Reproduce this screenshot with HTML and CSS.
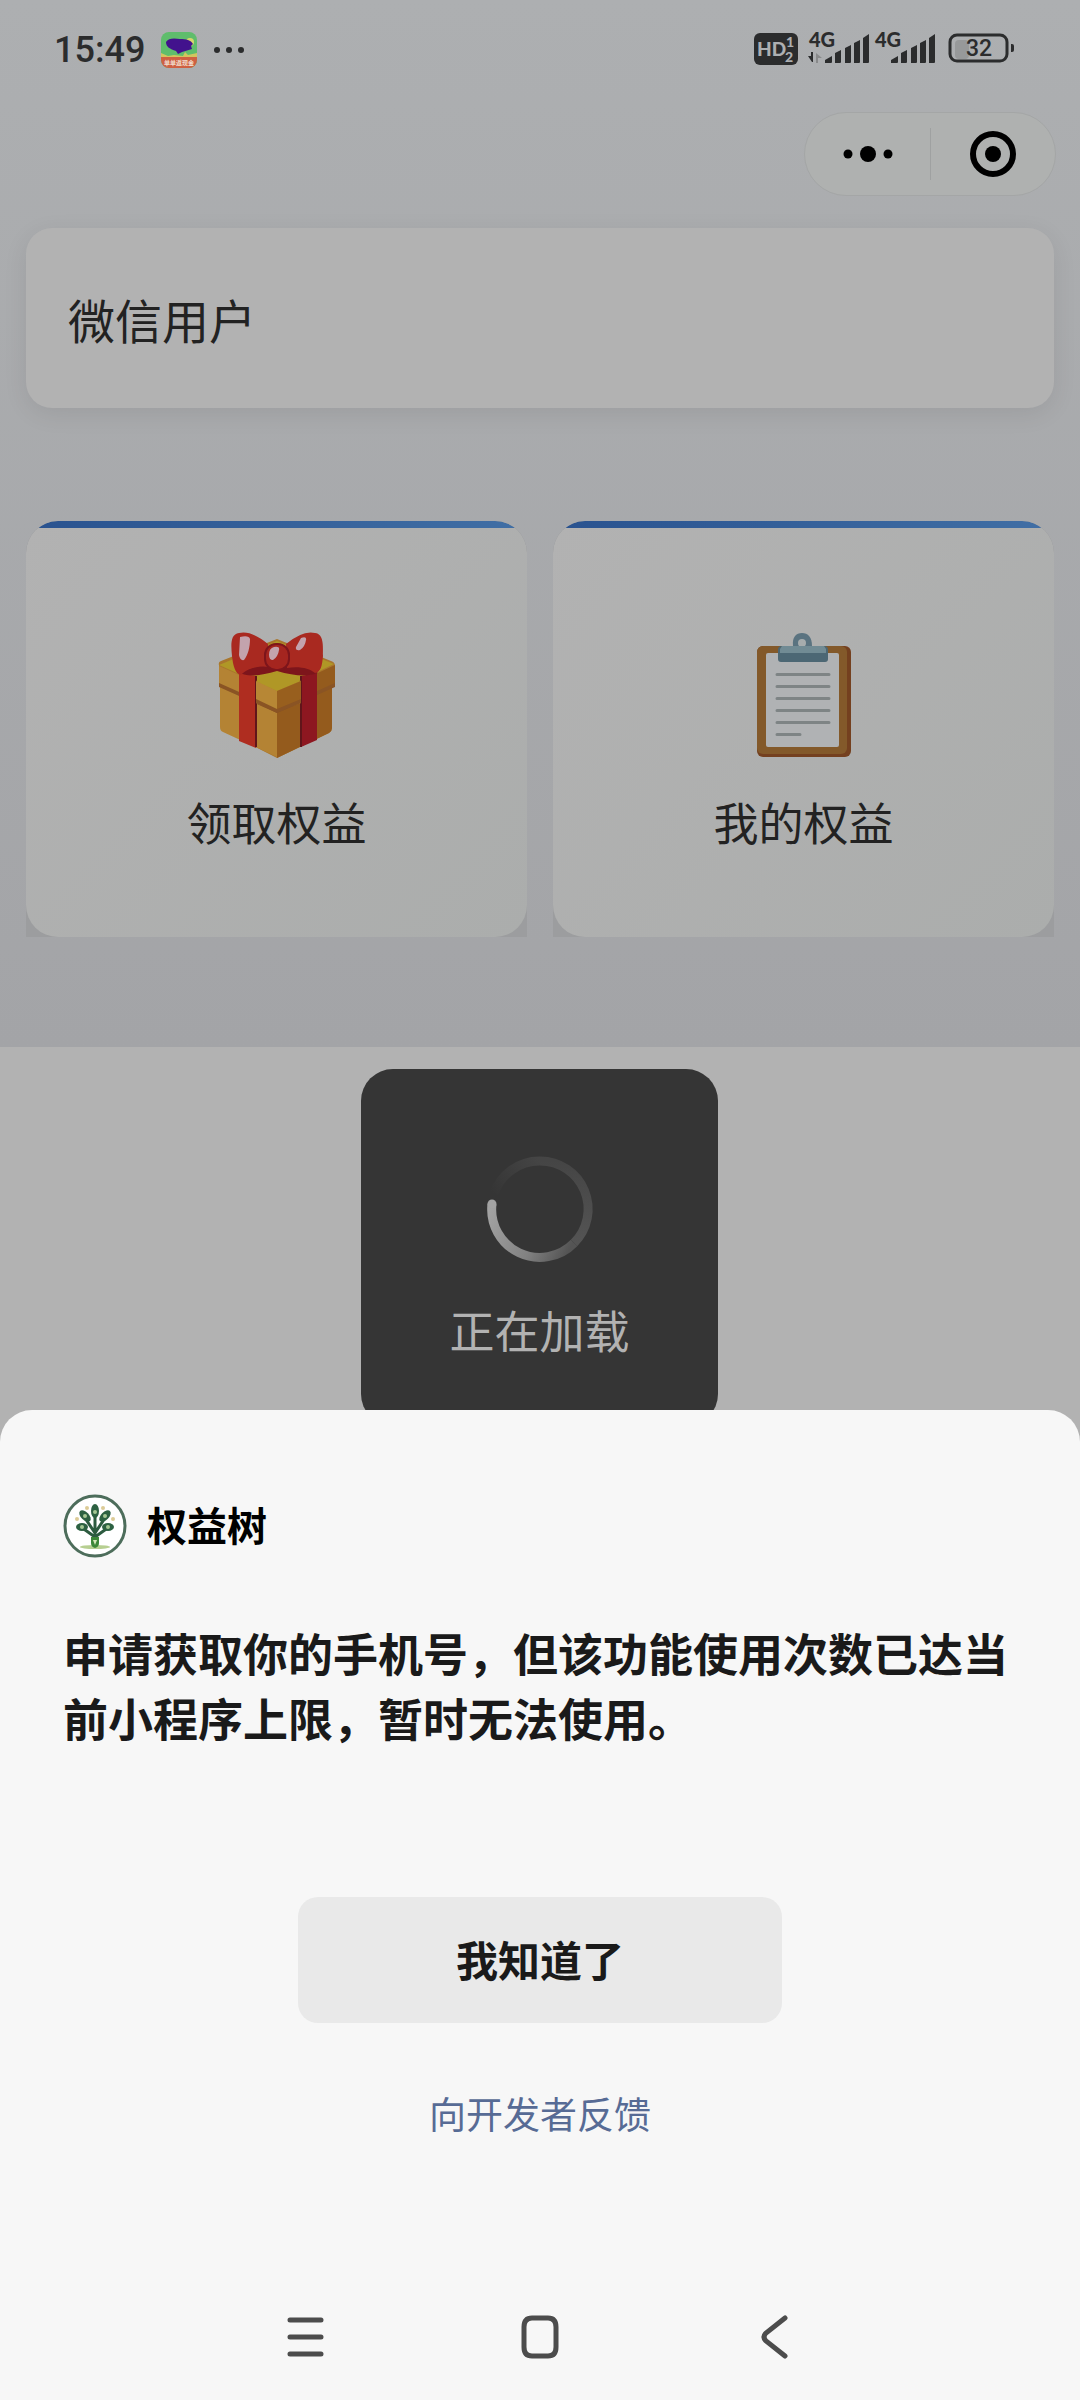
FILE: index.html
```html
<!DOCTYPE html>
<html lang="zh-CN">
<head>
<meta charset="utf-8">
<meta name="viewport" content="width=device-width, initial-scale=1">
<title>权益树</title>
<link rel="stylesheet" href="styles.css">
</head>
<body>
<div class="screen">
  <main class="home">
    <header class="status">
      <time class="clock">15:49</time>
      <svg class="app-badge" viewBox="0 0 36 36" width="36" height="36" aria-hidden="true">
        <defs><clipPath id="badge"><rect width="36" height="36" rx="8"/></clipPath></defs>
        <g clip-path="url(#badge)">
          <rect width="36" height="36" fill="#5fbd6c"/>
          <circle cx="29" cy="10" r="4" fill="#d6d56d"/>
          <path d="M0 21l7 3 6-1 9 1 2-4 3 3 9-2v6H0z" fill="#d3c45f"/>
          <rect y="25" width="36" height="11" fill="#cf6042"/>
          <path d="M7 11l4 6 5 2-2-6z" fill="#e6d49c"/>
          <path d="M5 10c2-4 8-4 14-3 6 0 11 1 13 5l-2 2 1 3-10 3-4 2-2-3c-6-2-10-4-10-9z" fill="#42128d"/>
        </g>
        <text class="badge-text" x="18" y="33" text-anchor="middle">单单返现金</text>
      </svg>
      <svg width="32" height="8" viewBox="0 0 32 8" fill="#2b2c2d" aria-hidden="true"><circle cx="4" cy="4" r="3"/><circle cx="16" cy="4" r="3"/><circle cx="28" cy="4" r="3"/></svg>
      <div class="status-right">
        <svg width="262" height="48" viewBox="0 -6 262 48" fill="#2b2c2d" role="img" aria-label="HD 4G 4G 32%">
          <rect x="0" y="1" width="44" height="32" rx="6"/>
          <g class="hd" fill="#adafb1"><text x="3" y="24" font-size="19">HD</text><text x="32" y="15" font-size="14">1</text><text x="31" y="30" font-size="14">2</text></g>
          <g id="net"><text class="net" x="55" y="15">4G</text><path d="M71 31v-3l7-4v6q0 1-1 1zM81 31V21l6-3v12q0 1-1 1zM91 31V16l6-3v17q0 1-1 1zM100 31V11l6-3v22q0 1-1 1zM109 31V6l6-4v28q0 1-1 1z"/></g>
          <use href="#net" x="66"/>
          <path d="M54 24h3v-4h2v10h-1z"/><path d="M62 21l6 5h-4v5h-2z" fill="#88898a"/>
          <rect x="201" y="8" width="14" height="19" rx="4" fill="#97999a"/>
          <rect x="196" y="3" width="57" height="26" rx="7" fill="none" stroke="#2b2c2d" stroke-width="3"/>
          <path d="M257 12h1q2 0 2 2v4q0 2-2 2h-1z"/>
          <text class="battery" x="225" y="24" text-anchor="middle">32</text>
        </svg>
      </div>
    </header>
    <div class="capsule-row">
      <div class="capsule">
        <button class="capsule-button" type="button" aria-label="更多"><svg width="52" height="24" viewBox="0 0 52 24"><circle cx="6" cy="12" r="4.500"/><circle cx="26" cy="12" r="8"/><circle cx="46" cy="12" r="4.500"/></svg></button>
        <button class="capsule-button" type="button" aria-label="关闭"><svg width="48" height="48" viewBox="0 0 48 48"><circle cx="24" cy="24" r="20" fill="none" stroke="#000" stroke-width="6"/><circle cx="24" cy="24" r="8"/></svg></button>
      </div>
    </div>
    <section class="user-card">微信用户</section>
    <nav class="features">
      <a class="feature" href="#claim"><span class="feature-face">
        <svg width="120" height="128" viewBox="0 0 120 128" aria-hidden="true">
          <path d="M2 34q-1-3 2-4l56-22 54 22q4 1 4 5v18l-3 2v42q0 3-3 5l-52 25-53-27q-3-1-3-4V54l-2-2z" fill="#a9762d"/>
          <path d="M2 34L60 10l57 23-57 27z" fill="#b09726"/>
          <path d="M2 35l58 26v65L6 101q-3-1-3-5V55l-1-2z" fill="#b48334"/>
          <path d="M60 61l58-27v19l-3 3v41q0 3-3 5l-52 25z" fill="#945b1d"/>
          <path d="M2 52l58 26 58-26v4L60 82 2 56z" fill="#8a5424"/>
          <path d="M22 42l17 3v72l-17-7z" fill="#af2d20"/>
          <path d="M84 45l16-3v67l-16 7z" fill="#8d1720"/>
          <path d="M39 45v71M84 45v71" stroke="#60151a" stroke-width="2"/>
          <path d="M39 50l21-9 24 9-24 10z" fill="#b09726"/>
          <path d="M39 50l21 10 24-10v22L60 80 39 72z" fill="#b78735"/>
          <path d="M60 60l24-10v19L60 79z" fill="#985f1e"/>
          <path d="M39 68l21 10 24-10v4L60 82 39 72z" fill="#8a5424"/>
          <path d="M23 42c12-11 64-11 78 0-10 4-24 3-41-2-17 5-30 6-37 2z" fill="#7d151b"/>
          <path d="M51 13q-17-14-29-11c-9 1-8 13-7 23 1 9 3 18 9 19 5-6 17-10 28-8z" fill="#a92920"/>
          <path d="M69 13q17-14 29-11c9 1 8 13 8 23-1 10-2 16-8 17-6-5-16-7-28-5z" fill="#a92920"/>
          <rect x="48" y="13" width="24" height="26" rx="11" fill="#a5251f" stroke="#7d151b" stroke-width="2"/>
          <path d="M23 6q9-2 10 2c0 8-2 16-6 21q-4 1-5-5zM84 7q6-2 5 2-1 7-6 10-5 1-4-3zM57 16q6-1 5 3-1 7-6 10-4 0-4-5 0-7 5-8z" fill="#c3a3ad"/>
        </svg>
        <span>领取权益</span></span>
      </a>
      <a class="feature" href="#mine"><span class="feature-face">
        <svg width="120" height="128" viewBox="0 0 120 128" aria-hidden="true">
          <rect x="13" y="15" width="94" height="111" rx="6" fill="#74401f"/>
          <rect x="13" y="15" width="90" height="108" rx="6" fill="#83592a"/>
          <rect x="22" y="22" width="73" height="94" rx="2" fill="#b0b2b4"/>
          <path d="M33 43.500h52M33 55.500h52M33 67.500h52M33 79.500h52M33 91.500h52M33 103.500h23" stroke="#7e8485" stroke-width="3" stroke-linecap="round"/>
          <path d="M49 15c-1-9 3-13 9-13s10 4 10 13z" fill="#5a7380"/>
          <circle cx="58" cy="12" r="4" fill="#a6acad"/>
          <path d="M38 15h42q4 0 4 4v9q0 3-3 3H37q-3 0-3-3v-9q0-4 4-4z" fill="#4c6774"/>
          <path d="M38 15h42l2 3v4H36v-4z" fill="#718b94"/>
        </svg>
        <span>我的权益</span></span>
      </a>
    </nav>
  </main>
  <div class="rest">
    <div class="toast" role="status">
      <svg width="106" height="106" viewBox="0 0 106 106" fill="none" stroke-width="9" aria-hidden="true">
        <defs>
          <linearGradient id="right" x1="0" y1="0" x2="0" y2="1"><stop stop-color="#454545"/><stop offset="1" stop-color="#545454"/></linearGradient>
          <linearGradient id="bottom" gradientUnits="userSpaceOnUse" x1="86" y1="86" x2="6" y2="47"><stop stop-color="#545454"/><stop offset=".4" stop-color="#818181"/><stop offset="1" stop-color="#a3a3a3"/></linearGradient>
          <linearGradient id="tail" gradientUnits="userSpaceOnUse" x1="8" y1="40" x2="53" y2="5"><stop stop-color="#353535"/><stop offset="1" stop-color="#454545"/></linearGradient>
        </defs>
        <path d="M7 38A48 48 0 0 1 53 5" stroke="url(#tail)"/>
        <path d="M53 5A48 48 0 0 1 87 87" stroke="url(#right)"/>
        <path d="M87 87A48 48 0 0 1 5 48" stroke="url(#bottom)"/>
        <circle cx="5" cy="48" r="4.500" fill="#a3a3a3" stroke="none"/>
      </svg>
      <span>正在加载</span>
    </div>
  </div>
  <section class="sheet" role="dialog" aria-labelledby="message">
    <header class="brand">
      <svg width="64" height="64" viewBox="0 0 64 64" aria-hidden="true">
        <circle cx="32" cy="32" r="30" fill="#fff" stroke="#4d6d5b" stroke-width="3"/>
        <ellipse cx="32" cy="53" rx="15" ry="2" fill="#b7cf91"/>
        <path d="M32 16v30M32 39L22 24M32 39l10-15M32 43L18 33M32 43l14-10" stroke="#2d5b40" stroke-width="3" fill="none"/>
        <g fill="#2d6142"><ellipse cx="32" cy="17" rx="4" ry="7"/><ellipse cx="22" cy="22" rx="4" ry="7" transform="rotate(-45 22 22)"/><ellipse cx="42" cy="22" rx="4" ry="7" transform="rotate(45 42 22)"/><ellipse cx="19" cy="33" rx="6" ry="4"/><ellipse cx="45" cy="33" rx="6" ry="4"/></g>
        <g fill="#a5c794"><circle cx="32" cy="18" r="2"/><circle cx="22" cy="22" r="2"/><circle cx="42" cy="22" r="2"/><circle cx="19" cy="33" r="2"/><circle cx="45" cy="33" r="2"/></g>
        <g fill="#dccb96"><circle cx="24" cy="14" r="2"/><circle cx="40" cy="14" r="2"/><circle cx="14" cy="25" r="2"/><circle cx="50" cy="25" r="2"/></g>
        <path d="M28 43h8v6q0 4-4 5-4-1-4-5z" fill="#3d8738"/><path d="M30 46h4l-2 5z" fill="#d5e6b9"/>
      </svg>
      <span>权益树</span>
    </header>
    <h1 class="message" id="message">申请获取你的手机号，但该功能使用次数已达当前小程序上限，暂时无法使用。</h1>
    <button class="confirm" type="button">我知道了</button>
    <a class="feedback" href="#feedback">向开发者反馈</a>
    <nav class="system-nav">
      <button type="button" aria-label="最近任务"><svg width="44" height="48" viewBox="0 0 44 48"><path d="M7 7h31M7 24h31M7 41h31"/></svg></button>
      <button type="button" aria-label="主屏幕"><svg width="44" height="48" viewBox="0 0 44 48"><path d="M14 5h16q8 0 8 9v20q0 9-8 9H14q-8 0-8-9V14q0-9 8-9z"/></svg></button>
      <button type="button" aria-label="返回"><svg width="44" height="48" viewBox="0 0 44 48"><path d="M32 5L13 20q-4 4 0 8l19 15"/></svg></button>
    </nav>
  </section>
</div>
</body>
</html>
```
FILE: styles.css
```css
* { box-sizing: border-box; }

body {
  margin: 0;
  background: #b2b2b2;
  color: #222;
  font-family: "Noto Sans CJK SC", sans-serif;
}

button {
  border: 0;
  padding: 0;
  background: none;
  color: inherit;
  font: inherit;
}

a { text-decoration: none; }
svg { display: block; overflow: visible; }

.screen {
  display: flex;
  flex-direction: column;
  min-height: 100vh;
}

.home {
  padding: 0 26px 110px;
  background: linear-gradient(#adafb1, #a3a4a7);
}

.status {
  display: flex;
  align-items: center;
  gap: 16px;
  height: 100px;
  padding: 0 38px 0 28px;
}

.clock {
  color: #2b2c2d;
  font: 500 36px/100px Roboto, sans-serif;
}

.badge-text { fill: #f2dfd0; font-size: 6px; font-weight: 700; }
.status-right { margin-left: auto; }
.hd { font-family: Lato, sans-serif; font-weight: 900; }
.net { font: 900 20px Lato, sans-serif; }
.battery { font: 500 23px Roboto, sans-serif; }

.capsule-row {
  display: flex;
  justify-content: flex-end;
  margin-right: -2px;
  padding-top: 12px;
}

.capsule {
  display: flex;
  width: 252px;
  height: 84px;
  border: 1px solid #a4a6a6;
  border-radius: 42px;
  background: #afb1b0;
}

.capsule-button {
  display: grid;
  flex: 1;
  place-items: center;
}

.capsule-button + .capsule-button {
  background: linear-gradient(#9fa1a1, #9fa1a1) left / 1px 52px no-repeat;
}

.user-card {
  margin-top: 32px;
  padding: 59px 42px 57px;
  border-radius: 26px;
  background: #b2b2b2;
  box-shadow: 0 6px 24px rgba(0, 0, 0, .08);
  font-size: 47px;
  line-height: 64px;
}

.features {
  display: grid;
  grid-template-columns: 1fr 1fr;
  gap: 26px;
  margin-top: 113px;
}

.feature {
  overflow: hidden;
  background: #9c9d9f;
  border-radius: 32px 32px 0 0;
  color: #222;
  font-size: 45px;
  line-height: 64px;
}

.feature-face {
  display: flex;
  flex-direction: column;
  align-items: center;
  gap: 31px;
  padding: 110px 0 83px;
  border-radius: 32px;
  background:
    linear-gradient(90deg, #29528f, #416fa5) top / 100% 7px no-repeat,
    linear-gradient(135deg, #b2b2b2, #abadac);
}

.rest {
  position: relative;
  flex: 1;
}

.toast {
  position: absolute;
  top: 22px;
  left: calc(50% - 179px);
  display: flex;
  flex-direction: column;
  align-items: center;
  gap: 36px;
  width: 357px;
  height: 357px;
  padding-top: 87px;
  border-radius: 32px;
  background: #353535;
  color: #b2b2b2;
  font-size: 45px;
  line-height: 64px;
}

.sheet {
  position: relative;
  display: flex;
  flex-direction: column;
  align-items: center;
  padding: 84px 63px 0;
  border-radius: 32px 32px 0 0;
  background: #f7f7f7;
}

.brand {
  display: flex;
  align-items: center;
  align-self: stretch;
  gap: 20px;
  color: #000;
  font-size: 40px;
  font-weight: 700;
  line-height: 60px;
}

.brand span { padding-bottom: 4px; }

.message {
  align-self: stretch;
  margin: 62px 0 0;
  color: #1a1a1a;
  font-size: 45px;
  font-weight: 700;
  line-height: 65px;
}

.confirm {
  width: 484px;
  height: 126px;
  margin-top: 147px;
  padding-bottom: 4px;
  border-radius: 20px;
  background: #e9e9e9;
  color: #1a1a1a;
  font-size: 42px;
  font-weight: 700;
}

.feedback {
  margin-top: 62px;
  color: #576b95;
  font-size: 37px;
  line-height: 56px;
}

.system-nav {
  display: grid;
  grid-template-columns: repeat(3, 235px);
  justify-content: center;
  align-items: center;
  height: 126px;
  margin-top: 133px;
}

.system-nav svg {
  margin: 0 auto;
  fill: none;
  stroke: #4c4c4c;
  stroke-width: 5;
  stroke-linecap: round;
}
```
